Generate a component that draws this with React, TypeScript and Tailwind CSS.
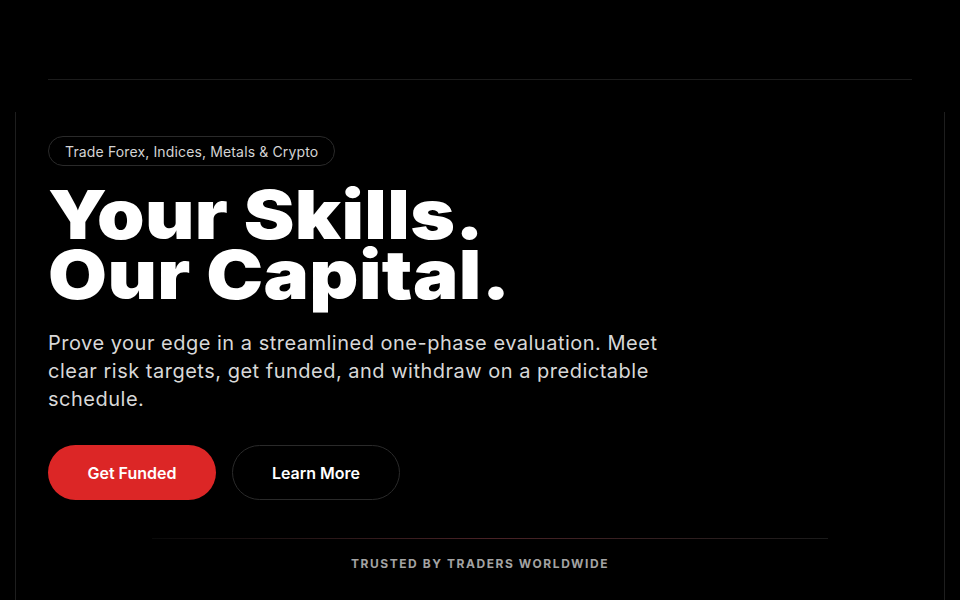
export default function App() {
  return (
    <div className="h-[600px] bg-black text-white overflow-hidden" style={{ fontFamily: 'Inter, "Noto Sans", sans-serif' }}>
      {/* nav */}
      <header className="px-12 h-[80px] flex items-end">
        <div className="w-full border-b border-[#1c1c1c]" />
      </header>

      <section className="mx-[15px] mt-[32px] h-[520px] border-x border-[#1e1e1e] pt-[24px]">
        <div className="px-[32px]">
          <div className="inline-flex items-center h-[30px] px-4 rounded-full border border-[#2a2a2a] text-[14px] tracking-[0.01em] text-[#d4d4d4]">
            Trade Forex, Indices, Metals &amp; Crypto
          </div>

          <h1 className="mt-[18px] origin-left scale-x-[1.12] text-[68px] leading-[60px] font-black tracking-[0.005em] text-white">
            Your Skills.
            <br />
            Our Capital.
          </h1>

          <p className="mt-[25px] max-w-[640px] text-[20px] leading-[28px] tracking-[0.025em] text-[#d8d8d8]">
            Prove your edge in a streamlined one-phase evaluation. Meet clear risk targets, get funded, and withdraw on a predictable schedule.
          </p>

          <div className="mt-[32px] flex gap-4">
            <button className="w-[168px] h-[55px] rounded-full bg-[#dc2626] text-white text-[16px] font-semibold">
              Get Funded
            </button>
            <button className="w-[168px] h-[55px] rounded-full border border-[#2a2a2a] bg-black text-white text-[16px] font-semibold">
              Learn More
            </button>
          </div>
        </div>

        <div className="mt-[38px] ml-[136px] w-[676px] h-px bg-gradient-to-r from-[#0a0a0a] via-[#4a2226] to-[#1a1a1a]" />
        <div className="mt-[16px] text-center text-[12px] font-bold tracking-[0.13em] text-[#a3a3a3]">
          TRUSTED BY TRADERS WORLDWIDE
        </div>
      </section>
    </div>
  );
}
